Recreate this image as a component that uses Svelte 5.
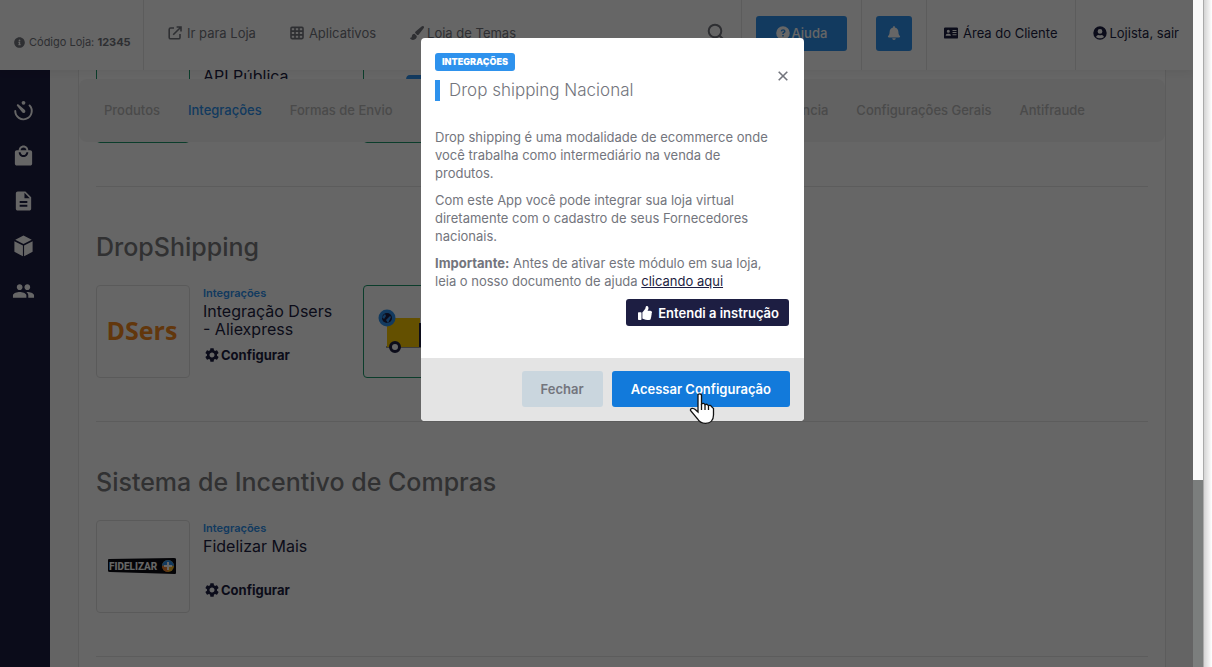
<script lang="ts">
  /* Store admin, "Integrações" tab, with the Drop shipping app dialog open on top.
     The list behind it is scrolled, so its first row slides under the header and tabs. */
  type App = { name?: string; logo: string; active?: boolean };
  type Section = { title?: string; apps: App[] };

  const sections: Section[] = [
    {
      apps: [
        { name: 'API Pública', logo: 'none', active: true },
        { logo: 'stripe', active: true },
      ],
    },
    {
      title: 'DropShipping',
      apps: [
        { name: 'Integração Dsers\n- Aliexpress', logo: 'dsers' },
        { logo: 'truck', active: true },
      ],
    },
    {
      title: 'Sistema de Incentivo de Compras',
      apps: [{ name: 'Fidelizar Mais', logo: 'fidelizar' }],
    },
  ];

  const tabsStart = ['Produtos', 'Integrações', 'Formas de Envio'];
  const tabsEnd = ['Transferência', 'Configurações Gerais', 'Antifraude'];
  const menu = [
    { icon: 'timer', label: 'Painel' },
    { icon: 'bag', label: 'Vendas' },
    { icon: 'doc', label: 'Páginas' },
    { icon: 'box', label: 'Produtos' },
    { icon: 'people', label: 'Clientes' },
  ];

  let current = $state('Integrações');
  let open = $state(true);
</script>

{#snippet icon(name: string)}
  {#if name === 'info'}
    <svg class="ic sm" viewBox="0 0 512 512" aria-hidden="true"><path d="M256 8C119.043 8 8 119.083 8 256c0 136.997 111.043 248 248 248s248-111.003 248-248C504 119.083 392.957 8 256 8zm0 110c23.196 0 42 18.804 42 42s-18.804 42-42 42-42-18.804-42-42 18.804-42 42-42zm56 254c0 6.627-5.373 12-12 12h-88c-6.627 0-12-5.373-12-12v-24c0-6.627 5.373-12 12-12h12v-64h-12c-6.627 0-12-5.373-12-12v-24c0-6.627 5.373-12 12-12h64c6.627 0 12 5.373 12 12v100h12c6.627 0 12 5.373 12 12v24z" /></svg>
  {:else if name === 'external'}
    <svg class="ic line" viewBox="0 0 14 14" aria-hidden="true"><path d="M6 2H2.6Q1.2 2 1.2 3.4v8Q1.2 12.8 2.6 12.8h8q1.4 0 1.4-1.4V8M8.6 1H13v4.4M13 1L5.2 8.8" /></svg>
  {:else if name === 'table'}
    <svg class="ic line" viewBox="0 0 14 14" aria-hidden="true"><rect x="1" y="1.4" width="12" height="11.2" rx="1" /><path d="M1 5.1h12M1 8.9h12M5 1.4v11.2M9 1.4v11.2" /></svg>
  {:else if name === 'brush'}
    <svg class="ic" viewBox="0 0 14 14" aria-hidden="true"><path d="M13.700.4c-.6-.6-1.400-.4-2.100.1L5.600 5.500c-.5.5-.6 1-.4 1.500l2 2c.6.1 1.200-.1 1.600-.6l5-6.500c.4-.5.4-1.100-.1-1.500zM4.500 7.700c-1.700 0-2.600 1.100-2.700 2.800-.1 1-.7 1.500-1.800 1.300.1 1.300 1.500 2.100 3 2.100 2.500 0 4-1.500 3.800-4z" /></svg>
  {:else if name === 'search'}
    <svg class="ic search-ic" viewBox="0 0 18 18" aria-hidden="true"><circle cx="8" cy="8" r="6.300" /><path d="M12.500 12.500L17 17" /></svg>
  {:else if name === 'help'}
    <svg class="ic" viewBox="0 0 14 14" aria-hidden="true"><path fill-rule="evenodd" d="M7 .2a6.800 6.800 0 1 0 0 13.600A6.800 6.800 0 0 0 7 .2zM4.700 5.300C4.800 3.900 5.700 3.200 7.100 3.200c1.400 0 2.400.8 2.400 2 0 1-.5 1.500-1.200 1.900-.5.3-.6.5-.6.9H6.300c0-1 .3-1.500 1-1.900.5-.3.7-.5.7-.9 0-.4-.4-.7-.9-.7-.6 0-.9.3-1 .9zM6.200 9h1.600v1.600H6.200z" /></svg>
  {:else if name === 'bell'}
    <svg class="ic" viewBox="0 0 448 512" aria-hidden="true"><path d="M224 512c35.32 0 63.97-28.65 63.97-64H160.03c0 35.35 28.65 64 63.97 64zm215.39-149.71c-19.32-20.76-55.47-51.99-55.47-154.29 0-77.7-54.48-139.9-127.94-155.16V32c0-17.67-14.32-32-31.98-32s-31.98 14.33-31.98 32v20.84C118.56 68.1 64.08 130.3 64.08 208c0 102.3-36.15 133.53-55.47 154.29-6 6.45-8.66 14.16-8.61 21.71.11 16.4 12.98 32 32.1 32h383.8c19.12 0 32-15.6 32.1-32 .05-7.55-2.61-15.27-8.61-21.71z" /></svg>
  {:else if name === 'card'}
    <svg class="ic" viewBox="0 0 14 14" aria-hidden="true"><path fill-rule="evenodd" d="M1.200 1.400h11.600q1.200 0 1.200 1.200v8.800q0 1.200-1.200 1.200H1.200Q0 12.600 0 11.400V2.600Q0 1.400 1.200 1.400zM4.300 3.800a1.500 1.500 0 1 0 0 3 1.500 1.500 0 0 0 0-3zM1.700 9.700h5.200c0-1.300-.8-2-2-2H3.700c-1.200 0-2 .7-2 2zM8.500 4v1h4V4zm0 2.100v1h4v-1zm0 2.100v1h4v-1z" /></svg>
  {:else if name === 'user'}
    <svg class="ic" viewBox="0 0 14 14" aria-hidden="true"><path fill-rule="evenodd" d="M7 .3a6.700 6.700 0 1 0 0 13.400A6.700 6.700 0 0 0 7 .3zM7 3a2.400 2.400 0 1 1 0 4.800A2.400 2.400 0 0 1 7 3zM3 10.900c.5-1.300 1.300-2 2.500-2 1 .4 2 .4 3 0 1.200 0 2 .7 2.500 2C9 12.700 5 12.700 3 10.900z" /></svg>
  {:else if name === 'gear'}
    <svg class="ic" viewBox="2 2 20 20" aria-hidden="true"><path d="M19.14,12.94c0.04-0.3,0.06-0.61,0.06-0.94c0-0.32-0.02-0.64-0.07-0.94l2.03-1.58c0.18-0.14,0.23-0.41,0.12-0.61l-1.92-3.32c-0.12-0.22-0.37-0.29-0.59-0.22l-2.39,0.96c-0.5-0.38-1.03-0.7-1.62-0.94L14.4,2.81c-0.04-0.24-0.24-0.41-0.48-0.41h-3.84c-0.24,0-0.43,0.17-0.47,0.41L9.25,5.35C8.66,5.59,8.12,5.92,7.63,6.29L5.24,5.33c-0.22-0.08-0.47,0-0.59,0.22L2.74,8.87C2.62,9.08,2.66,9.34,2.86,9.48l2.03,1.58C4.84,11.36,4.8,11.69,4.8,12s0.02,0.64,0.07,0.94l-2.03,1.58c-0.18,0.14-0.23,0.41-0.12,0.61l1.92,3.32c0.12,0.22,0.37,0.29,0.59,0.22l2.39-0.96c0.5,0.38,1.03,0.7,1.62,0.94l0.36,2.54c0.05,0.24,0.24,0.41,0.48,0.41h3.84c0.24,0,0.44-0.17,0.47-0.41l0.36-2.54c0.59-0.24,1.13-0.56,1.62-0.94l2.39,0.96c0.22,0.08,0.47,0,0.59-0.22l1.92-3.32c0.12-0.22,0.07-0.47-0.12-0.61L19.14,12.94z M12,15.6c-1.98,0-3.6-1.62-3.6-3.6s1.62-3.6,3.6-3.6s3.6,1.62,3.6,3.6S13.98,15.6,12,15.6z" /></svg>
  {:else if name === 'thumb'}
    <svg class="ic" viewBox="0 0 512 512" aria-hidden="true"><path d="M104 224H24c-13.255 0-24 10.745-24 24v240c0 13.255 10.745 24 24 24h80c13.255 0 24-10.745 24-24V248c0-13.255-10.745-24-24-24zM384 81.452c0 42.416-25.97 66.208-33.277 94.548h101.723c33.397 0 59.397 27.746 59.553 58.098.084 17.938-7.546 37.249-19.439 49.197l-.11.11c9.836 23.337 8.237 56.037-9.308 79.469 8.681 25.895-.069 57.704-16.382 74.757 4.298 17.598 2.244 32.575-6.148 44.632C440.202 511.587 389.616 512 346.839 512l-2.845-.001c-48.287-.017-87.806-17.598-119.56-31.725-15.957-7.099-36.821-15.887-52.651-16.178-6.54-.12-11.783-5.457-11.783-11.998v-213.77c0-3.2 1.282-6.271 3.558-8.521 39.614-39.144 56.648-80.587 89.117-113.111 14.804-14.832 20.188-37.236 25.393-58.902C282.515 39.293 291.817 0 312 0c24 0 72 8 72 81.452z" /></svg>
  {:else if name === 'close'}
    <svg class="ic line" viewBox="0 0 14 14" aria-hidden="true"><path d="M2.700 2.700l8.600 8.600M11.300 2.700l-8.600 8.600" /></svg>
  {:else if name === 'timer'}
    <svg class="ic lg" viewBox="0 0 24 24" aria-hidden="true"><circle cx="12" cy="3.500" r="2" /><path d="M5.300 5.200c.5-.4 1-.3 1.500.1l6.400 5.300c1.400 1.200.8 3.400-1 3.500-.8 0-1.400-.4-1.800-1L5.200 6.600c-.3-.5-.3-1 .1-1.400z" /><path class="arc" d="M18.300 6.200A8.600 8.600 0 1 1 3.400 12" /></svg>
  {:else if name === 'bag'}
    <svg class="ic lg" viewBox="0 0 24 24" aria-hidden="true"><path d="M19 6h-2c0-2.760-2.240-5-5-5S7 3.240 7 6H5c-1.100 0-1.990.9-1.990 2L3 20c0 1.100.9 2 2 2h14c1.100 0 2-.9 2-2V8c0-1.100-.9-2-2-2zm-7-3c1.660 0 3 1.340 3 3H9c0-1.660 1.340-3 3-3zm0 10c-2.760 0-5-2.240-5-5h2c0 1.660 1.340 3 3 3s3-1.340 3-3h2c0 2.760-2.240 5-5 5z" /></svg>
  {:else if name === 'doc'}
    <svg class="ic lg" viewBox="0 0 24 24" aria-hidden="true"><path d="M14 2H6c-1.100 0-1.990.9-1.990 2L4 20c0 1.100.89 2 1.990 2H18c1.100 0 2-.9 2-2V8l-6-6zm2 16H8v-2h8v2zm0-4H8v-2h8v2zm-3-5V3.500L18.500 9H13z" /></svg>
  {:else if name === 'box'}
    <svg class="ic lg" viewBox="0 0 24 24" aria-hidden="true"><path d="M12 1l8.600 4.400L12 9.800 3.400 5.400zM2.500 7l8.900 4.500v11.300L2.500 18zM21.500 7l-8.900 4.500v11.300l8.900-4.800z" /></svg>
  {:else if name === 'people'}
    <svg class="ic lg" viewBox="0 0 24 24" aria-hidden="true"><path d="M16 11c1.660 0 2.990-1.340 2.990-3S17.660 5 16 5c-1.660 0-3 1.340-3 3s1.340 3 3 3zm-8 0c1.660 0 2.990-1.340 2.990-3S9.660 5 8 5C6.340 5 5 6.340 5 8s1.340 3 3 3zm0 2c-2.330 0-7 1.170-7 3.500V19h14v-2.500c0-2.330-4.670-3.500-7-3.500zm8 0c-.29 0-.62.02-.97.05 1.160.84 1.970 1.970 1.970 3.450V19h6v-2.500c0-2.330-4.670-3.500-7-3.500z" /></svg>
  {/if}
{/snippet}

{#snippet logo(name: string)}
  {#if name === 'dsers'}
    <svg class="logo" viewBox="0 0 92 91" role="img" aria-label="DSers">
      <text class="dsers" x="45" y="54" text-anchor="middle">DSers</text>
    </svg>
  {:else if name === 'truck'}
    <svg class="logo" viewBox="0 0 92 91" aria-hidden="true">
      <rect x="22" y="60" width="60" height="2" fill="#999" />
      <rect x="23" y="32" width="33" height="29" fill="#fac800" />
      <path d="M55 37h14l9 10v14H55z" fill="#1e2042" />
      <circle cx="31" cy="61" r="4.500" fill="#fff" stroke="#1e2042" stroke-width="3" />
      <circle cx="68" cy="61" r="4.500" fill="#fff" stroke="#1e2042" stroke-width="3" />
      <circle cx="23" cy="32" r="8.500" fill="#2e92ed" />
      <circle cx="23" cy="32" r="5" fill="#1e2042" />
      <path d="M18 31l3-3 1 2-2 3zM22 34l4-4 1 1-3 6z" fill="#2e92ed" />
    </svg>
  {:else if name === 'fidelizar'}
    <svg class="logo" viewBox="0 0 92 91" role="img" aria-label="Fidelizar Mais">
      <path d="M11 39q0-1 1-1l65-1q2 0 2 1v14q0 1-1 1l-65-2q-2 0-2-1z" fill="#0a0a12" />
      <text class="fidelizar" x="12" y="49">FIDELIZAR</text>
      <circle cx="71" cy="45" r="6" fill="#f5b623" />
      <path d="M65 45a6 6 0 0 1 12 0l-6-1z" fill="#2e92ed" />
      <path d="M65 45l6-1v7a6 6 0 0 1-6-6z" fill="#f08030" />
      <path d="M71 41v8M67 45h8" stroke="#fff" stroke-width="2" />
    </svg>
  {:else if name === 'stripe'}
    <svg class="logo" viewBox="0 0 92 91" aria-hidden="true">
      <path d="M46 24h32l-3 5H42q0-5 4-5z" fill="#2e92ed" />
    </svg>
  {/if}
{/snippet}

<div class="window">
  <div class="app">
    <header class="topbar">
      <div class="store">{@render icon('info')}<span>Código Loja: <b>12345</b></span></div>
      <nav class="links" aria-label="Atalhos">
        <a href="#loja">{@render icon('external')}Ir para Loja</a>
        <a href="#aplicativos">{@render icon('table')}Aplicativos</a>
        <a class="themes" href="#temas">{@render icon('brush')}Loja de Temas</a>
      </nav>
      <button class="search" aria-label="Buscar">{@render icon('search')}</button>
      <div class="cell"><button class="btn help">{@render icon('help')}Ajuda</button></div>
      <div class="cell"><button class="btn bell" aria-label="Notificações">{@render icon('bell')}</button></div>
      <div class="cell client"><a href="#cliente">{@render icon('card')}Área do Cliente</a></div>
      <div class="cell user"><a href="#sair">{@render icon('user')}Lojista, sair</a></div>
    </header>

    <div class="below">
      <nav class="sidebar" aria-label="Menu">
        {#each menu as m}
          <a href="#menu" aria-label={m.label}>{@render icon(m.icon)}</a>
        {/each}
      </nav>

      <main>
        <div class="panel">
          <nav class="tabs" aria-label="Configurações">
            {#each [tabsStart, tabsEnd] as group}
              <div class="group">
                {#each group as t}
                  <button class:on={t === current} onclick={() => (current = t)}>{t}</button>
                {/each}
              </div>
            {/each}
          </nav>

          <div class="list">
            {#each sections as s}
              <section>
                {#if s.title}<h2>{s.title}</h2>{/if}
                <div class="grid">
                  {#each s.apps as a}
                    <article>
                      <div class="thumb" class:active={a.active}>{@render logo(a.logo)}</div>
                      {#if a.name}
                        <div>
                          <span class="kind">Integrações</span>
                          <h3>{a.name}</h3>
                          <button class="configure" onclick={() => (open = true)}>{@render icon('gear')}Configurar</button>
                        </div>
                      {/if}
                    </article>
                  {/each}
                </div>
              </section>
            {/each}
          </div>
        </div>
      </main>
    </div>

    {#if open}
      <div class="overlay">
        <div class="modal" role="dialog" aria-modal="true" aria-labelledby="dlg-title">
          <div class="head">
            <div>
              <span class="badge">Integrações</span>
              <h1 id="dlg-title">Drop shipping Nacional</h1>
            </div>
            <button class="close" aria-label="Fechar janela" onclick={() => (open = false)}>{@render icon('close')}</button>
          </div>
          <div class="body">
            <p>Drop shipping é uma modalidade de ecommerce onde você trabalha como intermediário na venda de produtos.</p>
            <p>Com este App você pode integrar sua loja virtual diretamente com o cadastro de seus Fornecedores nacionais.</p>
            <p><b>Importante:</b> Antes de ativar este módulo em sua loja, leia o nosso documento de ajuda <a href="#ajuda">clicando aqui</a></p>
            <button class="got">{@render icon('thumb')}Entendi a instrução</button>
          </div>
          <footer>
            <button class="cancel" onclick={() => (open = false)}>Fechar</button>
            <button class="go">
              Acessar Configuração
              <svg class="pointer" viewBox="0 0 26 32" aria-hidden="true">
                <path d="M9 2.500q2-1.500 3.500.5V12q2-1.500 3.500.7 2-1.200 3.400 1 2-1.200 3.400 1.200l1.700 1.600v6.500c0 5-3 8.300-8 8.300-4 0-6.500-1.600-8-4.500l-7-8.300q-.4-1.800 1.500-2.200 2-.2 3.500 1.400L9 20z" />
                <path d="M12.500 12v6M16 13v5M19.500 14v4" />
              </svg>
            </button>
          </footer>
        </div>
      </div>
    {/if}
  </div>
  <div class="scroll"><div class="knob"></div></div>
  <div class="edge"></div>
</div>

<style>
  :global(body) {
    margin: 0;
    overflow: hidden;
  }
  .window {
    --navy: #1d1e42;
    --blue: #2e92ed;
    --text: #73757d;
    --line: #e6e6e6;
    display: flex;
    height: 100vh;
    font: 13px/18px Inter, sans-serif;
    color: var(--text);
    background: #fff;
  }
  .app {
    position: relative;
    display: flex;
    flex-direction: column;
    flex: 1;
    min-width: 0;
    overflow: hidden;
  }
  button {
    padding: 0;
    border: 0;
    background: none;
    font: inherit;
    color: inherit;
    cursor: pointer;
  }
  a {
    color: inherit;
    text-decoration: none;
  }

  .ic {
    flex: none;
    width: 14px;
    height: 14px;
    fill: currentColor;
  }
  .ic.sm {
    width: 11px;
    height: 11px;
  }
  .ic.lg {
    width: 23px;
    height: 24px;
  }
  .ic.line {
    fill: none;
    stroke: currentColor;
    stroke-width: 1.6;
  }
  .search-ic {
    width: 18px;
    height: 18px;
    fill: none;
    stroke: currentColor;
    stroke-width: 2;
  }
  .arc {
    fill: none;
    stroke: currentColor;
    stroke-width: 2;
    stroke-linecap: round;
  }

  /* top bar */
  .topbar {
    position: relative;
    z-index: 2;
    display: flex;
    height: 70px;
    flex: none;
    box-sizing: border-box;
    background: #fff;
    box-shadow: 0 2px 8px rgb(0 0 0 / 6%);
  }
  .topbar a,
  .store,
  .btn {
    display: flex;
    align-items: center;
    gap: 5px;
    white-space: nowrap;
  }
  .store {
    box-sizing: border-box;
    width: 144px;
    padding: 14px 0 0 14px;
    gap: 4px;
    border-right: 1px solid var(--line);
    font-size: 11px;
  }
  .links {
    display: flex;
    flex: 1;
    gap: 34px;
    padding: 0 0 4px 24px;
  }
  .topbar .themes {
    gap: 3px;
  }
  .search {
    padding: 0 16px 2px 0;
  }
  .cell {
    display: flex;
    align-items: center;
    padding: 0 14px 4px;
    border-left: 1px solid var(--line);
    color: var(--navy);
  }
  .cell.client,
  .cell.user {
    padding-left: 17px;
  }
  .cell.client {
    padding-right: 18px;
  }
  .topbar .user a {
    gap: 2px;
  }
  .btn {
    justify-content: center;
    width: 36px;
    height: 35px;
    border-radius: 3px;
    background: var(--blue);
    color: #fff;
    font-weight: 500;
  }
  .btn.help {
    gap: 2px;
    width: 91px;
  }

  /* side bar + page */
  .below {
    display: flex;
    flex: 1;
    min-height: 0;
  }
  .sidebar {
    display: flex;
    flex-direction: column;
    align-items: center;
    gap: 21px;
    box-sizing: border-box;
    width: 50px;
    padding: 29px 3px 0 0;
    background: var(--navy);
    color: #fff;
  }
  .sidebar a {
    display: flex;
  }
  main {
    flex: 1;
    min-width: 0;
    padding: 0 27px 0 28px;
    overflow: hidden;
    background: #f9f9f9;
  }
  .panel {
    position: relative;
    display: flow-root;
    min-height: 100%;
    border: 1px solid var(--line);
    border-width: 0 1px;
    background: #fff;
  }
  /* pinned over the scrolled list */
  .tabs {
    position: absolute;
    inset: 9px 0 auto;
    z-index: 1;
    display: flex;
    justify-content: space-between;
    padding: 0 80px 0 25px;
    border-radius: 8px;
    background: #f5f5f5;
    line-height: 63px;
    font-weight: 500;
    color: #b9b9b9;
  }
  .group {
    display: flex;
    gap: 28px;
  }
  .tabs .on {
    color: var(--blue);
  }
  .list {
    margin-top: -20px;
    padding: 0 17px;
  }
  section {
    height: 136px;
    border-bottom: 1px solid var(--line);
  }
  section:has(h2) {
    height: 234px;
  }
  h2 {
    margin: 0;
    padding: 44px 0 22px;
    font-size: 25px;
    line-height: 32px;
    font-weight: 500;
    color: #7a7b7e;
  }
  .grid {
    display: grid;
    grid-template-columns: repeat(4, 1fr);
    gap: 16px;
  }
  article {
    display: flex;
    gap: 13px;
  }
  .thumb {
    flex: none;
    width: 92px;
    height: 91px;
    border: 1px solid #e2e2e2;
    border-radius: 4px;
  }
  .thumb.active {
    border-color: #1d9a6c;
  }
  .logo {
    display: block;
  }
  .dsers {
    font: 700 25px "Open Sans", sans-serif;
    fill: #f58a1f;
  }
  .fidelizar {
    font: 800 10px Roboto, sans-serif;
    fill: #fff;
  }
  .kind {
    display: block;
    font-size: 11px;
    line-height: 17px;
    font-weight: 600;
    color: var(--blue);
  }
  h3 {
    min-height: 36px;
    margin: 0 0 8px;
    font-size: 16px;
    line-height: 18px;
    font-weight: 400;
    color: var(--navy);
    white-space: pre-line;
  }
  .configure {
    display: flex;
    align-items: center;
    gap: 2px;
    padding-left: 2px;
    font-weight: 700;
    color: var(--navy);
  }

  /* dialog */
  .overlay {
    position: absolute;
    inset: 0;
    z-index: 3;
    display: flex;
    align-items: flex-start;
    justify-content: center;
    padding: 38px 0 0 32px;
    background: rgb(0 0 0 / 60%);
  }
  .modal {
    width: 383px;
    border-radius: 4px;
    background: #fff;
  }
  .head {
    display: flex;
    justify-content: space-between;
    padding: 15px 14px 0;
  }
  .badge {
    display: block;
    width: fit-content;
    padding: 0 7px;
    border-radius: 3px;
    background: var(--blue);
    color: #fff;
    font-size: 9px;
    line-height: 18px;
    font-weight: 900;
    text-transform: uppercase;
  }
  h1 {
    margin: 9px 0 0;
    padding-left: 9px;
    border-left: 5px solid var(--blue);
    font-size: 17px;
    line-height: 21px;
    font-weight: 300;
  }
  .close {
    display: flex;
    align-self: flex-end;
    padding-bottom: 18px;
  }
  .body {
    display: flow-root;
    padding: 27px 15px 32px 14px;
  }
  p {
    margin: 0 10px 9px 0;
  }
  p a {
    color: var(--navy);
    text-decoration: underline;
  }
  .got {
    display: flex;
    align-items: center;
    gap: 6px;
    height: 27px;
    margin-left: auto;
    padding: 0 10px 0 12px;
    border-radius: 3px;
    background: var(--navy);
    color: #fff;
    font-weight: 600;
  }
  footer {
    display: flex;
    justify-content: flex-end;
    gap: 9px;
    padding: 13px 14px 14px;
    border-radius: 0 0 4px 4px;
    background: #e4e4e4;
    font-weight: 600;
  }
  footer button {
    position: relative;
    height: 36px;
    padding: 0 19px;
    border-radius: 3px;
  }
  .cancel {
    background: #cad6de;
  }
  .go {
    background: #127adb;
    color: #fff;
  }
  .pointer {
    position: absolute;
    top: 21px;
    left: 77px;
    width: 26px;
    height: 32px;
    fill: #fff;
    stroke: #111;
    stroke-width: 1.3;
  }

  /* window edge */
  .scroll {
    display: flex;
    align-items: flex-end;
    width: 10px;
    background: #f9f9f9;
  }
  .knob {
    width: 100%;
    height: 28%;
    background: #7b7e7d;
  }
  .edge {
    width: 9px;
    background: linear-gradient(90deg, #aaa 0 1px, #d4d4d4 1px, #fff);
  }
</style>
